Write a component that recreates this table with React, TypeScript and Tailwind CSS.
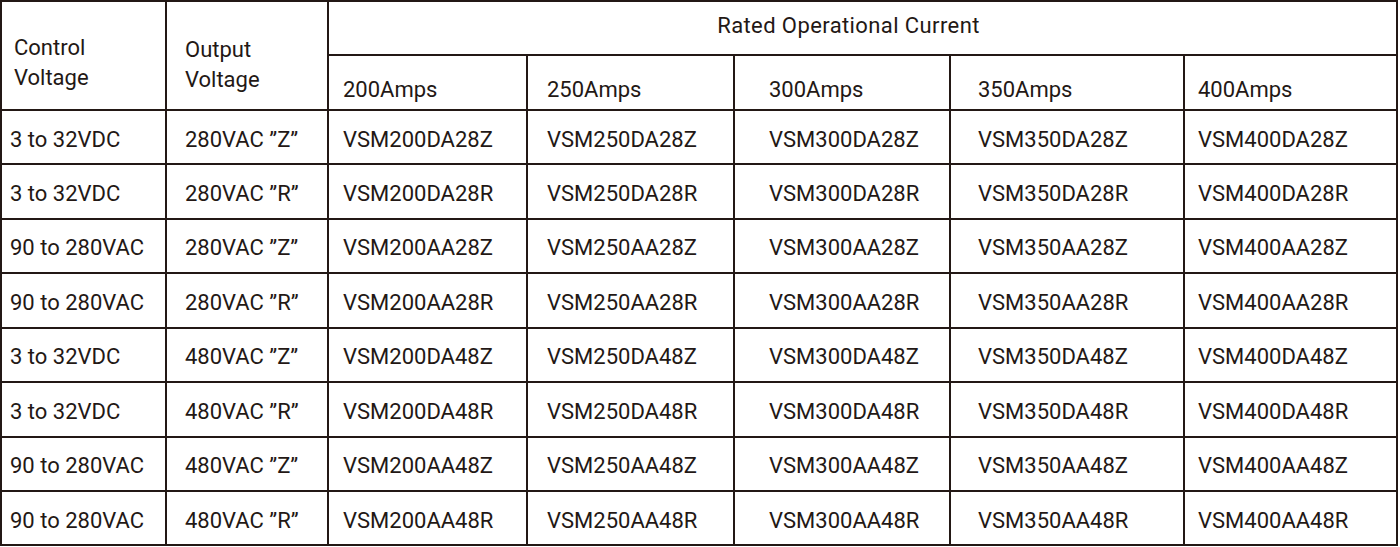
const amps = [200, 250, 300, 350, 400];

// left padding per amp column, matched to the reference
const ampPad = ["pl-[14px]", "pl-[19px]", "pl-[34px]", "pl-[27px]", "pl-[13px]"];

const rows = [
  { control: "3 to 32VDC", output: "280VAC ”Z”", code: "DA28Z" },
  { control: "3 to 32VDC", output: "280VAC ”R”", code: "DA28R" },
  { control: "90 to 280VAC", output: "280VAC ”Z”", code: "AA28Z" },
  { control: "90 to 280VAC", output: "280VAC ”R”", code: "AA28R" },
  { control: "3 to 32VDC", output: "480VAC ”Z”", code: "DA48Z" },
  { control: "3 to 32VDC", output: "480VAC ”R”", code: "DA48R" },
  { control: "90 to 280VAC", output: "480VAC ”Z”", code: "AA48Z" },
  { control: "90 to 280VAC", output: "480VAC ”R”", code: "AA48R" },
];

const cell = "border-2 border-[#231815] p-0 align-middle";

export default function App() {
  return (
    <div className="bg-white w-[1400px] h-[547px] overflow-hidden">
      <table
        className="table-fixed border-collapse w-[1398px] text-[22px] text-[#231815] leading-[26px]"
        style={{ fontFamily: "Roboto, 'Liberation Sans', sans-serif" }}
      >
        <colgroup>
          <col className="w-[165px]" />
          <col className="w-[162px]" />
          <col className="w-[199px]" />
          <col className="w-[207px]" />
          <col className="w-[216px]" />
          <col className="w-[234px]" />
          <col className="w-[213px]" />
        </colgroup>
        <thead>
          <tr className="h-[54.45px]">
            <th
              rowSpan={2}
              className={`${cell} text-left font-normal pl-[12px] pt-[15px] leading-[30px]`}
            >
              Control
              <br />
              Voltage
            </th>
            <th
              rowSpan={2}
              className={`${cell} text-left font-normal pl-[18px] pt-[20px] leading-[30px]`}
            >
              Output
              <br />
              Voltage
            </th>
            <th
              colSpan={5}
              className={`${cell} text-center font-normal tracking-[0.4px] pr-[28px] pb-[4px]`}
            >
              Rated Operational Current
            </th>
          </tr>
          <tr className="h-[54.45px]">
            {amps.map((a, i) => (
              <th
                key={a}
                className={`${cell} text-left font-normal pt-[14px] ${ampPad[i]}`}
              >
                {a}Amps
              </th>
            ))}
          </tr>
        </thead>
        <tbody>
          {rows.map((r, idx) => (
            <tr key={idx} className="h-[54.45px]">
              <td className={`${cell} pl-[8px] pt-[5px]`}>{r.control}</td>
              <td className={`${cell} pl-[18px] pt-[5px]`}>{r.output}</td>
              {amps.map((a, i) => (
                <td key={a} className={`${cell} pt-[5px] ${ampPad[i]}`}>
                  VSM{a}
                  {r.code}
                </td>
              ))}
            </tr>
          ))}
        </tbody>
      </table>
    </div>
  );
}
